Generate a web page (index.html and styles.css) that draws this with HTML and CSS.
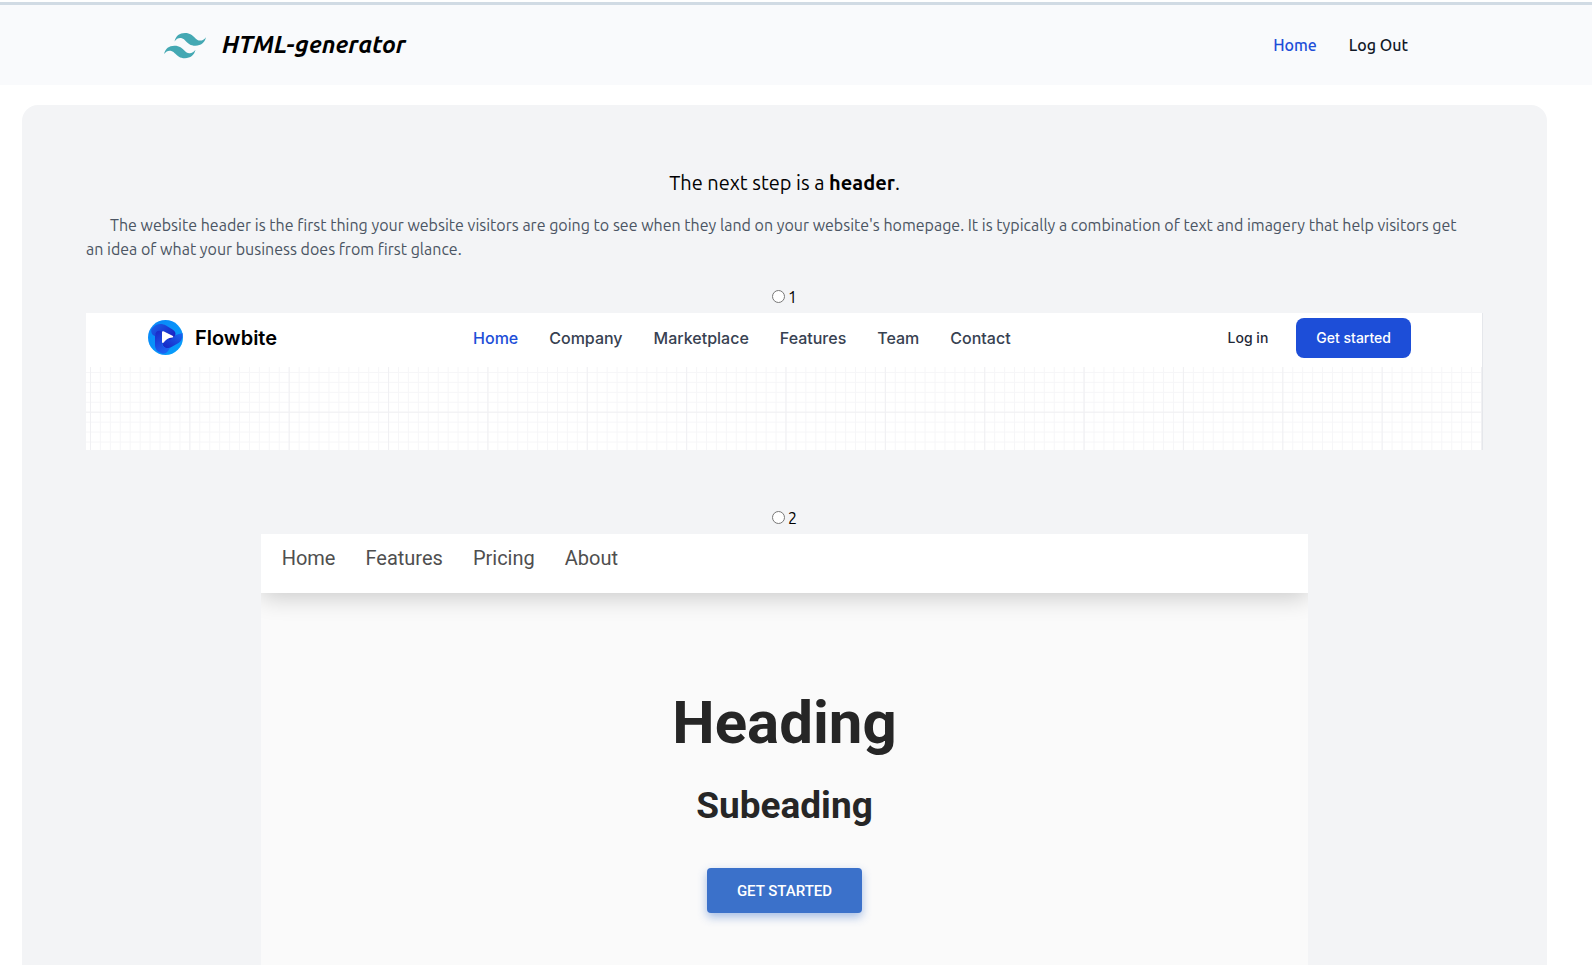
FILE: index.html
```html
<!DOCTYPE html>
<html lang="en">
<head>
<meta charset="utf-8">
<meta name="viewport" content="width=device-width, initial-scale=1">
<title>HTML-generator</title>
<link rel="stylesheet" href="styles.css">
</head>
<body>
<header class="site-header">
  <div class="site-header-inner">
    <a class="site-brand" href="#">
      <svg class="site-logo" viewBox="0 -1 54 34" aria-hidden="true"><path fill="#44a8b3" fill-rule="evenodd" d="M27 0c-7.2 0-11.7 3.6-13.5 10.8 2.7-3.6 5.85-4.95 9.45-4.05 2.054.513 3.522 2.004 5.147 3.653C30.744 13.09 33.808 16.2 40.5 16.2c7.2 0 11.7-3.6 13.5-10.8-2.7 3.6-5.85 4.95-9.45 4.05-2.054-.513-3.522-2.004-5.147-3.653C36.756 3.11 33.692 0 27 0zM13.5 16.2C6.3 16.2 1.8 19.8 0 27c2.7-3.6 5.85-4.95 9.45-4.05 2.054.514 3.522 2.004 5.147 3.653C17.244 29.29 20.308 32.4 27 32.4c7.2 0 11.7-3.6 13.5-10.8-2.7 3.6-5.85 4.95-9.45 4.05-2.054-.513-3.522-2.004-5.147-3.653C23.256 19.31 20.192 16.2 13.5 16.2z"/></svg>
      <span>HTML-generator</span>
    </a>
    <nav class="site-nav">
      <a class="current" href="#">Home</a>
      <a href="#">Log Out</a>
    </nav>
  </div>
</header>
<main class="panel">
  <h1 class="panel-title">The next step is a <strong>header</strong>.</h1>
  <p class="panel-text">The website header is the first thing your website visitors are going to see when they land on your website's homepage. It is typically a combination of text and imagery that help visitors get an idea of what your business does from first glance.</p>
  <section class="option">
    <label class="choice"><input type="radio" name="header" value="1">1</label>
    <div class="flow">
      <div class="flow-bar">
        <a class="flow-brand" href="#">
          <svg class="flow-logo" viewBox="0 0 35 35" aria-hidden="true">
            <defs>
              <linearGradient id="disc" x1="0" y1="0" x2="1" y2="1"><stop offset="0" stop-color="#0a86f8"/><stop offset="1" stop-color="#07a0fb"/></linearGradient>
              <linearGradient id="blade" x1="0" y1="0" x2="1" y2=".6"><stop offset="0" stop-color="#1a64ec"/><stop offset="1" stop-color="#1a24c4"/></linearGradient>
              <linearGradient id="stem" x1="0" y1="0" x2=".4" y2="1"><stop offset="0" stop-color="#1a27c6"/><stop offset="1" stop-color="#1c62f2"/></linearGradient>
              <linearGradient id="tail" x1="1" y1="0" x2="0" y2="1"><stop offset="0" stop-color="#1a66f0"/><stop offset="1" stop-color="#1822c2"/></linearGradient>
            </defs>
            <circle cx="17.5" cy="17.5" r="17.5" fill="url(#disc)"/>
            <path fill="url(#tail)" d="M34.500 13c.5 4-1 8-4 10l-8 4.500c-4 2-7 0-8-3l-.5-3.500 14-6c3-1 5-1.500 6.500-2z"/>
            <path fill="url(#blade)" d="M3.500 9C7 4 13 2.500 18 5.500l6.500 4c4 2.500 4 6 0 8.500l-3 2-8-8c-3-1-6 0-6.500 4C4 15 2.500 12 3.500 9z"/>
            <path fill="url(#stem)" d="M7 16c0-5 4-6.500 7-4.500V22c0 4.500 3 7 8 6-2 4-5 6.500-8 5.500C9 32 7 29 7 25z"/>
            <path fill="#fff" d="M14 12c0-1 1-1 2-.6l8.500 4.400c1 .6 1 1.400 0 1.700-4.500.5-6.500 2-8.500 4.800-1 1-2 .6-2-.4z"/>
          </svg>
          <span>Flowbite</span>
        </a>
        <nav class="flow-nav">
          <a class="current" href="#">Home</a>
          <a href="#">Company</a>
          <a href="#">Marketplace</a>
          <a href="#">Features</a>
          <a href="#">Team</a>
          <a href="#">Contact</a>
        </nav>
        <div class="flow-actions">
          <a href="#">Log in</a>
          <button type="button">Get started</button>
        </div>
      </div>
      <svg class="flow-grid" viewBox="0 0 1405 84" preserveAspectRatio="xMinYMin slice" aria-hidden="true">
        <defs>
          <pattern id="minor" x="4" y="5" width="10" height="10" patternUnits="userSpaceOnUse"><path d="M.5 0V10M0 .5H10" stroke="#f6f6f8" fill="none"/></pattern>
          <pattern id="major" x="4" y="45" width="100" height="100" patternUnits="userSpaceOnUse"><path d="M.5 0V100M0 .5H100" stroke="#f0f0f3" fill="none"/></pattern>
        </defs>
        <rect width="1405" height="84" fill="url(#minor)"/>
        <rect width="1405" height="84" fill="url(#major)"/>
      </svg>
    </div>
  </section>
  <section class="option">
    <label class="choice"><input type="radio" name="header" value="2">2</label>
    <div class="hero">
      <nav class="hero-nav">
        <a href="#">Home</a>
        <a href="#">Features</a>
        <a href="#">Pricing</a>
        <a href="#">About</a>
      </nav>
      <div class="hero-body">
        <h2>Heading</h2>
        <h3>Subeading</h3>
        <button type="button">GET STARTED</button>
      </div>
    </div>
  </section>
</main>
</body>
</html>
```
FILE: styles.css
```css
* { box-sizing: border-box; }
body {
  margin: 0;
  padding-top: 2px;
  background: #fff;
  color: #000;
  font: 16px/24px Ubuntu, "Noto Sans", sans-serif;
  overflow-x: hidden;
}
a { color: inherit; text-decoration: none; }
h1, h2, h3, p { margin: 0; }
button { border: 0; cursor: pointer; }

.site-header { border-top: 3px solid #d1dbe4; background: #f9fafc; }
.site-header-inner {
  display: flex;
  align-items: center;
  justify-content: space-between;
  max-width: 1280px;
  height: 80px;
  margin: 0 auto;
  padding: 0 28px 0 8px;
}
.site-brand {
  display: flex;
  align-items: center;
  gap: 16px;
  font-size: 24px;
  font-weight: 600;
  font-style: italic;
}
.site-logo { width: 42px; height: 27px; }
.site-nav { display: flex; gap: 32px; font-weight: 500; color: #111827; }
.site-nav .current { color: #1d4ed8; }

.panel {
  margin: 20px 45px 0 22px;
  padding: 64px;
  border-radius: 16px;
  background: #f3f4f6;
}
.panel-title {
  margin-bottom: 16px;
  font-size: 20px;
  line-height: 28px;
  font-weight: 400;
  text-align: center;
}
.panel-title strong { font-weight: 700; }
.panel-text { padding-right: 8px; color: #4b5563; text-indent: 24px; }
.option { margin-top: 24px; text-align: center; }
.option + .option { margin-top: 56px; }
.choice {
  display: flex;
  align-items: center;
  justify-content: center;
  gap: 3px;
  margin-bottom: 4px;
}
.choice input { width: 13px; height: 13px; margin: 0 0 1px; }

.flow {
  background: #fff;
  border-right: 1px solid #e5e7eb;
  font-family: Inter, sans-serif;
  text-align: left;
}
.flow-bar {
  display: flex;
  align-items: center;
  height: 54px;
  padding: 0 71px 5px 62px;
}
.flow-brand {
  display: flex;
  align-items: center;
  gap: 12px;
  margin-right: 196px;
  font-size: 20px;
  font-weight: 600;
}
.flow-logo { width: 35px; height: 35px; }
.flow-nav { display: flex; gap: 31px; font-weight: 500; color: #374151; }
.flow-nav .current { color: #1d4ed8; }
.flow-actions {
  display: flex;
  align-items: center;
  gap: 28px;
  margin-left: auto;
  font-size: 14px;
  font-weight: 500;
  color: #1f2937;
}
.flow-actions button {
  height: 40px;
  padding: 0 20px;
  border-radius: 8px;
  background: #1d4ed8;
  color: #fff;
  font: inherit;
}
.flow-grid { display: block; width: 100%; height: 83px; }

.hero {
  width: 75%;
  margin: 0 auto;
  overflow: hidden;
  background: #fafafa;
  color: #262626;
  font-family: Roboto, sans-serif;
}
.hero-nav {
  display: flex;
  gap: 30px;
  height: 59px;
  padding: 12px 21px;
  background: #fff;
  box-shadow: 0 4px 24px rgba(0, 0, 0, .2);
  color: #4f4f4f;
  font-size: 20px;
}
.hero-body {
  display: flex;
  flex-direction: column;
  align-items: center;
  padding: 92px 24px 96px;
}
.hero-body h2 { margin-bottom: 23px; font-size: 60px; line-height: 76px; font-weight: 700; }
.hero-body h3 { margin-bottom: 40px; font-size: 37px; line-height: 44px; font-weight: 700; }
.hero-body button {
  height: 45px;
  padding: 0 30px;
  border-radius: 4px;
  background: #3b71ca;
  box-shadow: 0 4px 10px rgba(59, 113, 202, .45);
  color: #fff;
  font: 500 15px/24px Roboto, sans-serif;
}
```
